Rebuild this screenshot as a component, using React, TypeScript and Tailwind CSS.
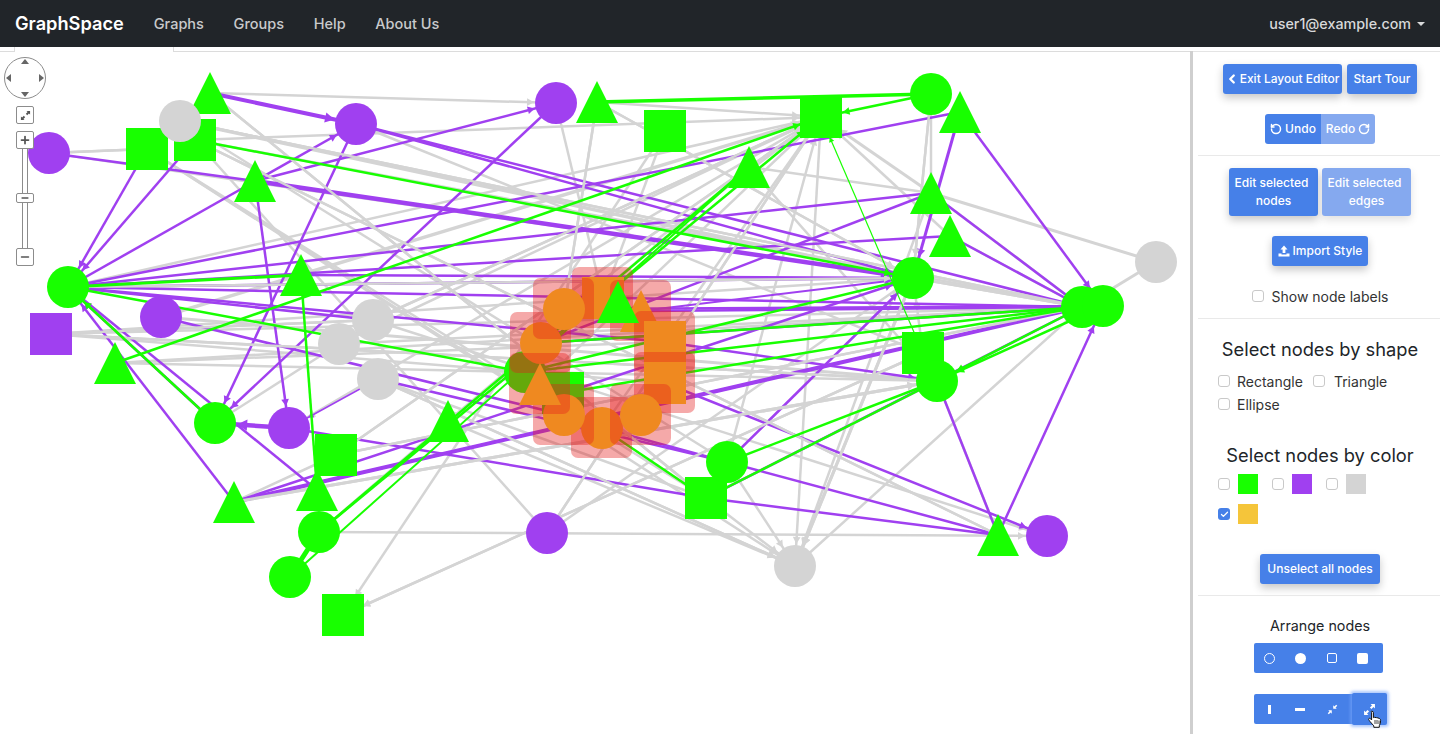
import React from "react";
import { Check, ChevronLeft, Minus, Plus, RotateCcw, RotateCw } from "lucide-react";

type Shape = "c" | "s" | "t";
type Node = [number, number, Shape, string];
const GREEN = "#18ff00";
const PURPLE = "#a040f0";
const GRAY = "#d4d4d4";
const YELLOW = "#f5c53a";
const SELECTED = "#f5cc22";

// x, y, shape, fill
const nodes: Record<number, Node> = {
  1: [49, 153, "c", PURPLE],
  2: [147, 149, "s", GREEN],
  3: [180, 121, "c", GRAY],
  4: [195, 140, "s", GREEN],
  5: [210, 93, "t", GREEN],
  6: [356, 124, "c", PURPLE],
  7: [255, 181, "t", GREEN],
  8: [556, 103, "c", PURPLE],
  9: [597, 102, "t", GREEN],
  10: [665, 131, "s", GREEN],
  11: [821, 117, "s", GREEN],
  12: [931, 94, "c", GREEN],
  13: [960, 112, "t", GREEN],
  14: [749, 167, "t", GREEN],
  15: [931, 193, "t", GREEN],
  16: [950, 236, "t", GREEN],
  17: [913, 278, "c", GREEN],
  18: [1156, 262, "c", GRAY],
  19: [1082, 307, "c", GREEN],
  20: [1103, 306, "c", GREEN],
  21: [68, 287, "c", GREEN],
  22: [51, 334, "s", PURPLE],
  23: [301, 275, "t", GREEN],
  24: [161, 317, "c", PURPLE],
  25: [373, 320, "c", GRAY],
  26: [339, 344, "c", GRAY],
  27: [378, 379, "c", GRAY],
  28: [115, 363, "t", GREEN],
  29: [215, 423, "c", GREEN],
  30: [289, 428, "c", PURPLE],
  31: [336, 455, "s", GREEN],
  32: [448, 421, "t", GREEN],
  33: [317, 490, "t", GREEN],
  34: [234, 502, "t", GREEN],
  35: [319, 532, "c", GREEN],
  36: [290, 577, "c", GREEN],
  37: [343, 615, "s", GREEN],
  38: [547, 533, "c", PURPLE],
  39: [795, 566, "c", GRAY],
  40: [706, 498, "s", GREEN],
  41: [727, 462, "c", GREEN],
  42: [923, 353, "s", GREEN],
  43: [937, 381, "c", GREEN],
  44: [998, 535, "t", GREEN],
  45: [1047, 536, "c", PURPLE],
  46: [564, 309, "c", SELECTED],
  47: [541, 343, "c", SELECTED],
  48: [564, 415, "c", SELECTED],
  49: [602, 428, "c", SELECTED],
  50: [641, 415, "c", SELECTED],
  51: [603, 298, "s", SELECTED],
  52: [665, 342, "s", SELECTED],
  53: [665, 383, "s", SELECTED],
  54: [540, 384, "t", SELECTED],
  55: [641, 311, "t", SELECTED],
  56: [525, 372, "c", GREEN],
  57: [563, 393, "s", GREEN],
  58: [618, 302, "t", GREEN],
};

// selected nodes, drawn one after the other with their overlay
const selected = [51, 47, 46, 55, 52, 53, 49, 50, 48, 54];
// node 3 sits on top of the squares and triangle next to it
const plainNodes = [1, 2, 4, 5, 3].concat(Array.from({ length: 40 }, (_, i) => i + 6), 56, 57);
const arrowTargets = new Set([21, 29, 30, 6, 8, 11, 17, 20, 37, 39, 43, 45]);

// from, to, width
const grayEdges: [number, number, number][] = [
  [1, 2, 2.5], [5, 8, 2.5], [4, 11, 2.5], [3, 17, 3.5], [3, 19, 2.5], [9, 11, 2.5], [24, 11, 3.5], [26, 11, 2.5],
  [25, 11, 2.5], [21, 11, 2.5], [15, 11, 3], [16, 11, 2.5], [9, 46, 2.5], [8, 51, 2.5], [10, 51, 2.5], [12, 15, 2.5],
  [12, 17, 2.5], [18, 19, 3], [18, 15, 3], [14, 15, 2.5], [9, 17, 2.5], [14, 43, 2.5], [15, 19, 2.5], [16, 19, 2.5],
  [17, 19, 2.5], [43, 44, 2.5], [35, 45, 2.5], [39, 19, 2.5], [17, 39, 3], [15, 39, 2.5], [40, 39, 2.5], [41, 39, 2.5],
  [27, 39, 2.5], [32, 39, 2.5], [43, 40, 3], [10, 37, 2.5], [42, 37, 2.5], [29, 26, 2.5], [34, 31, 2.5], [35, 32, 2.5],
  [22, 25, 2.5], [22, 17, 2.5], [22, 53, 2.5], [28, 52, 2.5], [21, 17, 2.5], [2, 40, 2.5], [2, 39, 2.5], [4, 38, 2.5],
  [4, 44, 2.5], [3, 41, 2.5], [4, 19, 2.5], [2, 48, 2.5], [11, 38, 2.5], [11, 39, 2.5], [11, 49, 2.5], [11, 54, 2.5],
  [11, 31, 2.5], [11, 30, 2.5], [11, 46, 2.5], [43, 24, 3], [43, 22, 2.5], [43, 28, 2.5], [19, 22, 2.5], [19, 26, 2.5],
  [19, 31, 2.5], [20, 28, 2.5], [42, 17, 2.5], [41, 11, 2.5], [34, 43, 3], [25, 45, 2.5], [17, 38, 2.5], [27, 40, 2.5],
  [5, 40, 2.5], [6, 42, 2.5], [1, 17, 2], [32, 14, 2.5],
];

const purpleEdges: [number, number, number][] = [
  [1, 7, 2.5], [7, 17, 4.5], [5, 6, 4], [6, 17, 2.5], [6, 19, 2.5], [2, 21, 2.5], [4, 21, 2.5], [21, 6, 2.5], [6, 29, 2.5],
  [7, 30, 2.5], [8, 29, 2.5], [7, 8, 2.5], [21, 17, 2.5], [21, 19, 2.5], [21, 15, 2.5], [21, 16, 2.5], [21, 13, 2.5], [13, 17, 3],
  [13, 20, 2.5], [15, 19, 2.5], [16, 19, 2.5], [15, 47, 2.5], [43, 44, 2.5], [44, 20, 2.5], [40, 44, 2.5], [41, 44, 2.5],
  [53, 45, 2.5], [52, 43, 2.5], [19, 34, 4], [19, 40, 2.5], [41, 17, 2.5], [27, 41, 2.5], [29, 21, 2.5], [34, 21, 2.5], [21, 33, 2.5],
  [30, 29, 4.5], [27, 30, 1.5], [34, 17, 2.5], [34, 19, 2.5], [30, 40, 2.5], [24, 48, 2.5], [23, 17, 2.5], [21, 52, 2.5],
  [21, 25, 2.5], [49, 41, 2.5], [47, 19, 2.5], [46, 20, 2.5], [55, 19, 2.5], [55, 17, 2],
];

const greenEdges: [number, number, number][] = [
  [21, 23, 3], [21, 56, 2.5], [28, 11, 2.5], [23, 33, 2.5], [29, 21, 2.5], [35, 36, 5], [35, 11, 2.5], [35, 14, 2.5], [36, 14, 2],
  [9, 12, 3.5], [12, 11, 2.5], [4, 17, 2.5], [42, 11, 1.2], [17, 56, 2.5], [19, 57, 2.5], [19, 56, 2.5], [19, 47, 2.5], [19, 43, 2.5],
  [20, 43, 2.5], [43, 41, 2.5], [43, 40, 2.5], [49, 40, 2.5],
];

function arrowHead(a: Node, b: Node, w: number) {
  const len = Math.hypot(b[0] - a[0], b[1] - a[1]);
  const ux = (b[0] - a[0]) / len;
  const uy = (b[1] - a[1]) / len;
  const tipX = b[0] - ux * 22;
  const tipY = b[1] - uy * 22;
  const size = 3 + w * 1.6;
  const backX = tipX - ux * size;
  const backY = tipY - uy * size;
  const half = size * 0.55;
  return `${tipX},${tipY} ${backX - uy * half},${backY + ux * half} ${backX + uy * half},${backY - ux * half}`;
}

function NodeShape({ id }: { id: number }) {
  const [x, y, shape, fill] = nodes[id];
  if (shape === "c") return <circle cx={x} cy={y} r={21} fill={fill} />;
  if (shape === "s") return <rect x={x - 21} y={y - 21} width={42} height={42} fill={fill} />;
  return <polygon points={`${x},${y - 21} ${x + 21},${y + 21} ${x - 21},${y + 21}`} fill={fill} />;
}

function EdgeGroup({ edges, color }: { edges: [number, number, number][]; color: string }) {
  return (
    <>
      {edges.map(([from, to, w], i) => {
        const a = nodes[from];
        const b = nodes[to];
        return (
          <g key={i}>
            <line x1={a[0]} y1={a[1]} x2={b[0]} y2={b[1]} stroke={color} strokeWidth={w} />
            {arrowTargets.has(to) && <polygon points={arrowHead(a, b, w)} fill={color} />}
          </g>
        );
      })}
    </>
  );
}

function GraphCanvas() {
  return (
    <svg viewBox="0 52 1190 682" className="block w-[1190px] h-[682px]">
      <EdgeGroup edges={grayEdges} color={GRAY} />
      <EdgeGroup edges={purpleEdges} color={PURPLE} />
      <EdgeGroup edges={grayEdges.filter((_, i) => i % 4 === 0)} color={GRAY} />
      <EdgeGroup edges={greenEdges} color={GREEN} />
      {plainNodes.map((id) => (
        <NodeShape key={id} id={id} />
      ))}
      {selected.map((id) => (
        <g key={id}>
          <NodeShape id={id} />
          <rect x={nodes[id][0] - 31} y={nodes[id][1] - 31} width={61} height={61} rx={7} fill="#e61e1e" fillOpacity={0.38} />
        </g>
      ))}
      <NodeShape id={58} />
    </svg>
  );
}

// two small arrows pointing out from the centre
function ExpandIcon({ size = 12 }: { size?: number }) {
  return (
    <svg width={size} height={size} viewBox="0 0 12 12" fill="currentColor">
      <path d="M7 1h4v4L9.700 3.700 7.800 5.600 6.400 4.200 8.300 2.300Z" />
      <path d="M5 11H1V7l1.300 1.300 1.900-1.900 1.400 1.400-1.900 1.900Z" />
    </svg>
  );
}

// two small arrows pointing in to the centre
function CollapseIcon({ size = 12 }: { size?: number }) {
  return (
    <svg width={size} height={size} viewBox="0 0 12 12" fill="currentColor">
      <path d="M6.800 5.200V1.400L8.100 2.700 10 .8 11.200 2 9.300 3.900 10.600 5.200Z" />
      <path d="M5.200 6.800V10.600L3.900 9.300 2 11.200 .8 10 2.700 8.100 1.400 6.800Z" />
    </svg>
  );
}

function PanZoom() {
  const btn = "flex items-center justify-center w-[18px] bg-white border border-[#8c8c8c] rounded-[2px] text-[#555]";
  return (
    <div className="absolute left-[4px] top-[5px] w-[42px] flex flex-col items-center">
      <div className="relative w-[42px] h-[42px] rounded-full border border-[#8c8c8c] bg-white">
        <span className="absolute left-[16px] top-[1px] w-0 h-0 border-x-[4px] border-x-transparent border-b-[5px] border-b-[#666]" />
        <span className="absolute left-[16px] bottom-[1px] w-0 h-0 border-x-[4px] border-x-transparent border-t-[5px] border-t-[#666]" />
        <span className="absolute left-[1px] top-[16px] w-0 h-0 border-y-[4px] border-y-transparent border-r-[5px] border-r-[#666]" />
        <span className="absolute right-[1px] top-[16px] w-0 h-0 border-y-[4px] border-y-transparent border-l-[5px] border-l-[#666]" />
      </div>
      <div className={`${btn} h-[18px] mt-[7px]`}>
        <ExpandIcon size={11} />
      </div>
      <div className={`${btn} h-[18px] mt-[7px]`}>
        <Plus size={12} strokeWidth={3.5} />
      </div>
      <div className="relative w-[6px] h-[99px] bg-white border-x border-[#8c8c8c]">
        <div className={`${btn} h-[10px] absolute left-[-7px] top-[44px]`}>
          <Minus size={10} strokeWidth={3.5} />
        </div>
      </div>
      <div className={`${btn} h-[18px]`}>
        <Minus size={12} strokeWidth={3} />
      </div>
    </div>
  );
}

function BlueButton({ children, className = "" }: { children: React.ReactNode; className?: string }) {
  return (
    <button className={`flex items-center justify-center bg-[#4680e8] text-white text-[12px] font-medium rounded-[3px] shadow-[0_4px_8px_rgba(0,0,0,0.22)] ${className}`}>
      {children}
    </button>
  );
}

function Box({ checked = false, className = "-mt-[2px]" }: { checked?: boolean; className?: string }) {
  if (checked) {
    return (
      <span className="flex items-center justify-center w-[12px] h-[12px] rounded-[3px] bg-[#4680e8] text-white">
        <Check size={9} strokeWidth={3.5} />
      </span>
    );
  }
  return <span className={`block w-[12px] h-[12px] rounded-[3px] bg-white border border-[#c9c9c9] ${className}`} />;
}

function ColorOption({ color, checked = false }: { color: string; checked?: boolean }) {
  return (
    <div className="flex items-center gap-[8px] w-[54px]">
      <Box checked={checked} className="" />
      <span className="block w-[20px] h-[20px]" style={{ backgroundColor: color }} />
    </div>
  );
}

function Divider() {
  return <div className="h-px bg-[#e9e9e9]" />;
}

export default function App() {
  return (
    <div className="w-[1440px] h-[734px] overflow-hidden bg-white flex flex-col font-['Inter',sans-serif] text-[#212529]">
      <nav className="h-[47px] shrink-0 bg-[#212529] flex items-center pl-[15px] pr-[15px] text-white">
        <span className="text-[18.200px] font-semibold mr-[30px]">GraphSpace</span>
        <div className="flex gap-[29.700px] text-[14.500px] font-medium text-[#c9cacc]">
          <span>Graphs</span>
          <span>Groups</span>
          <span>Help</span>
          <span>About Us</span>
        </div>
        <div className="ml-auto flex items-center gap-[6px] text-[14.300px] font-medium text-[#d8d9da]">
          user1@example.com
          <span className="w-0 h-0 border-x-[4px] border-x-transparent border-t-[4px] border-t-[#d8d9da]" />
        </div>
      </nav>

      <div className="flex flex-1 min-h-0">
        <div className="w-[1190px] shrink-0 flex flex-col">
          <div className="flex h-[5px] shrink-0">
            <div className="w-[15px] border-b border-r border-[#dcdcdc]" />
            <div className="w-[159px] border-r border-[#dcdcdc]" />
            <div className="flex-1 border-b border-[#dcdcdc]" />
          </div>
          <div className="relative flex-1 min-h-0">
            <GraphCanvas />
            <PanZoom />
          </div>
        </div>

        <div className="w-[3px] mt-[4px] shrink-0 bg-[#cfcfcf]" />

        <aside className="flex-1 min-w-0 mt-[4px] ml-[5px] flex flex-col">
          <div className="h-[104px] shrink-0 flex flex-col items-center pt-[12px] pl-[2px] gap-[20px] border-t border-[#e4e4e4] -ml-[5px]">
            <div className="flex gap-[5px] ml-[5px]">
              <BlueButton className="w-[119px] h-[30px]">
                <ChevronLeft size={14} strokeWidth={4} className="mr-[1px] -ml-[1px]" />
                Exit Layout Editor
              </BlueButton>
              <BlueButton className="w-[70px] h-[30px]">Start Tour</BlueButton>
            </div>
            <div className="flex h-[30px] ml-[5px] text-white text-[12px] font-medium">
              <button className="w-[56px] flex items-center justify-center gap-[3px] bg-[#4680e8] rounded-l-[3px]">
                <RotateCcw size={12} strokeWidth={3} />
                Undo
              </button>
              <button className="w-[54px] flex items-center justify-center gap-[3px] bg-[#85a9ef] rounded-r-[3px]">
                Redo
                <RotateCw size={12} strokeWidth={3} />
              </button>
            </div>
          </div>
          <Divider />

          <div className="h-[162px] shrink-0 flex flex-col items-center pt-[12px] pl-[2px]">
            <div className="flex gap-[4px]">
              <BlueButton className="w-[89px] h-[48px] leading-[18px] flex-col">
                <span className="pr-[4px]">Edit selected</span>
                <span>nodes</span>
              </BlueButton>
              <BlueButton className="w-[89px] h-[48px] leading-[18px] flex-col bg-[#85a9ef]! shadow-[0_4px_8px_rgba(0,0,0,0.12)]!">
                <span className="pr-[4px]">Edit selected</span>
                <span>edges</span>
              </BlueButton>
            </div>
            <BlueButton className="w-[96px] h-[30px] mt-[20px] gap-[3px]">
              <svg width="12" height="12" viewBox="0 0 12 12" fill="white">
                <path d="M6 0.5 9.500 4.500H7.400V8H4.600V4.500H2.500Z" />
                <path d="M0.500 8.500H3.500V9.500H8.500V8.500H11.500V11.500H0.500Z" />
              </svg>
              Import Style
            </BlueButton>
            <div className="flex items-center gap-[8px] mt-[24px] text-[14px] leading-[14px] text-[#333]">
              <Box />
              Show node labels
            </div>
          </div>
          <Divider />

          <div className="h-[276px] shrink-0 flex flex-col pt-[18px]">
            <h3 className="text-center pl-[2px] text-[18.300px] leading-[24px] font-normal">Select nodes by shape</h3>
            <div className="mt-[14px] pl-[20px] flex flex-wrap w-[200px] gap-y-[9px] text-[14px] leading-[14px] text-[#333]">
              <div className="flex items-center gap-[7px] mr-[10px]">
                <Box />
                Rectangle
              </div>
              <div className="flex items-center gap-[9px]">
                <Box />
                Triangle
              </div>
              <div className="flex items-center gap-[7px] w-full">
                <Box />
                Ellipse
              </div>
            </div>
            <h3 className="text-center pl-[2px] text-[18.300px] leading-[24px] font-normal mt-[31px]">Select nodes by color</h3>
            <div className="mt-[7px] pl-[20px] flex flex-wrap w-[190px] gap-y-[10px]">
              <ColorOption color={GREEN} />
              <ColorOption color={PURPLE} />
              <ColorOption color={GRAY} />
              <ColorOption color={YELLOW} checked />
            </div>
            <BlueButton className="w-[120px] h-[30px] mt-[30px] self-center ml-[2px]">Unselect all nodes</BlueButton>
          </div>
          <Divider />

          <div className="flex flex-col pt-[21px]">
            <h4 className="text-center text-[14.300px] leading-[18px] font-normal pl-[2px]">Arrange nodes</h4>
            <div className="mt-[8px] ml-[56px] w-[129px] h-[30px] bg-[#4680e8] rounded-[2px] grid grid-cols-4 pr-[5px] text-white">
              <span className="flex items-center justify-center"><span className="block w-[11px] h-[11px] rounded-full border-[1.5px] border-white" /></span>
              <span className="flex items-center justify-center"><span className="block w-[11px] h-[11px] rounded-full bg-white" /></span>
              <span className="flex items-center justify-center"><span className="block w-[10px] h-[10px] rounded-[2px] border border-white" /></span>
              <span className="flex items-center justify-center"><span className="block w-[11px] h-[11px] rounded-[2px] bg-white" /></span>
            </div>
            <div className="relative mt-[21px] ml-[56px] w-[129px] h-[30px] bg-[#4680e8] rounded-[2px] flex text-white">
              <span className="w-[30px] shrink-0 flex items-center justify-center"><span className="block w-[3px] h-[9px] bg-white" /></span>
              <span className="w-[32px] shrink-0 flex items-center justify-center"><span className="block w-[10px] h-[3px] bg-white" /></span>
              <span className="w-[36px] shrink-0 flex items-center justify-center pr-[4px]"><CollapseIcon size={11} /></span>
              <span className="flex shrink-0 items-center justify-center rounded-[2px] bg-[#4680e8] w-[35px] h-[32px] -mt-px shadow-[0_0_3px_2px_rgba(120,165,250,0.6)]"><ExpandIcon size={13} /></span>
              <svg className="absolute left-[113px] top-[16px]" width="16" height="19" viewBox="0 0 16 19">
                <path d="M5 1.200c.9 0 1.400.6 1.400 1.400v5l.9-.3.6.1 1.500.2 1.500.3 1.600.6c.7.4 1.100 1 1.100 1.800l-.3 3.200-1 2.200v1.600H6.800v-1.400L3 11.500c-1-1.500-1.700-2-1.200-2.800.4-.6 1.300-.4 1.900.2l.9 1V2.600C3.600 1.800 4.100 1.200 5 1.200Z" fill="white" stroke="#111" strokeWidth="1" strokeLinejoin="round" />
                <path d="M8 10v4M10 10v4M12 10.500v3.500" stroke="#111" strokeWidth="0.8" />
              </svg>
            </div>
          </div>
        </aside>
      </div>
    </div>
  );
}
